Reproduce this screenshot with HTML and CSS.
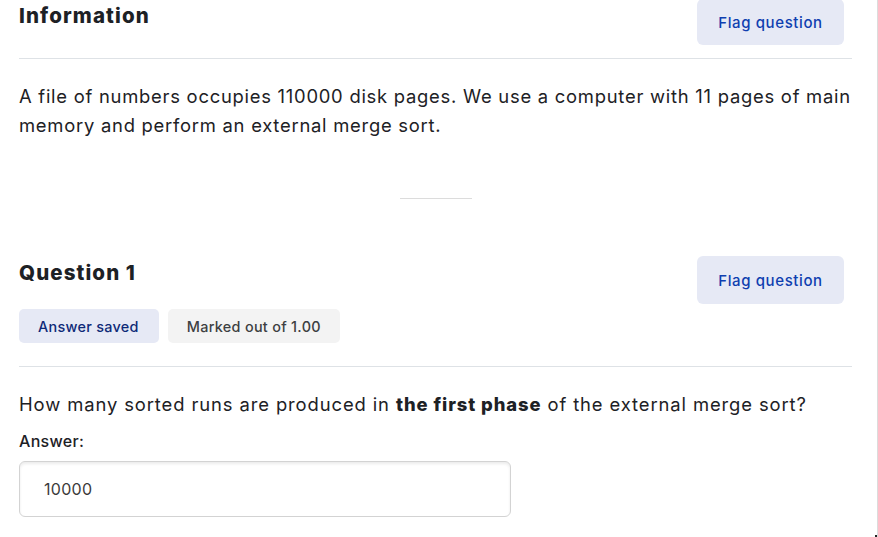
FILE: index.html
```html
<!DOCTYPE html>
<html>
<head>
<meta charset="utf-8">
<link rel="stylesheet" href="styles.css">
</head>
<body>
<div class="page">
  <div class="main">
    <section class="block first">
      <div class="head">
        <h3 class="title">Information</h3>
        <button class="flag">Flag question</button>
      </div>
      <div class="content">
        <p class="text">A file of numbers occupies 110000 disk pages. We use a computer with 11 pages of main memory and perform an external merge sort.</p>
      </div>
    </section>
    <div class="sep-wrap"><div class="sep"></div></div>
    <section class="block q">
      <div class="head">
        <div class="info">
          <h3 class="title">Question 1</h3>
          <div class="badges">
            <span class="badge saved">Answer saved</span>
            <span class="badge marked">Marked out of 1.00</span>
          </div>
        </div>
        <button class="flag">Flag question</button>
      </div>
      <div class="content">
        <p class="text qtext">How many sorted runs are produced in <strong>the first phase</strong> of the external merge sort?</p>
        <label class="lbl">Answer:</label>
        <div class="input">10000</div>
      </div>
    </section>
  </div>
  <div class="corner"></div>
</div>
</body>
</html>
```
FILE: styles.css
```css
* { box-sizing: border-box; }
html, body { margin: 0; padding: 0; background: #fff; }
body {
  font-family: "Inter", "Open Sans", sans-serif;
  color: #1d2125;
  width: 878px;
  height: 537px;
  overflow: hidden;
}
.page {
  position: relative;
  width: 878px;
  height: 537px;
}
.main {
  width: 878px;
  height: 537px;
  border-right: 1px solid #dcdcdc;
  padding-left: 19px;
  padding-right: 25px;
}
.head {
  display: flex;
  justify-content: space-between;
  align-items: flex-start;
  border-bottom: 1px solid #dee2e6;
}
.title {
  margin: 0;
  font-size: 20.5px;
  font-weight: 800;
  color: #1d2125;
  letter-spacing: 1.1px;
}
.first .head { height: 59px; }
.first .title { margin-top: 4px; line-height: 24px; }
.flag {
  font-family: inherit;
  font-size: 15px;
  font-weight: 500;
  letter-spacing: 0.6px;
  color: #0f3fb0;
  background: #e6e9f5;
  border: none;
  border-radius: 6px;
  width: 147px;
  height: 46px;
  margin-right: 8px;
  padding: 0;
}
.first .flag { margin-top: -1px; }
.content { padding-top: 23px; }
.text {
  margin: 0;
  font-size: 18.4px;
  line-height: 29px;
  color: #1d2125;
  letter-spacing: 0.75px;
}
.sep-wrap {
  display: flex;
  justify-content: center;
  padding-top: 58px;
  height: 108px;
}
.sep {
  width: 72px;
  border-top: 1px solid #dcdcdc;
  height: 0;
}
.q .head { height: 119px; }
.info { display: flex; flex-direction: column; }
.q .title { margin-top: 13px; line-height: 24px; }
.q .flag { margin-top: 8px; height: 48px; }
.badges { display: flex; gap: 9px; margin-top: 24px; }
.badge {
  font-size: 14.4px;
  font-weight: 500;
  letter-spacing: 0.3px;
  height: 34px;
  display: flex;
  align-items: center;
  border-radius: 5px;
  padding: 0 19px;
}
.saved { background: #e6e9f5; color: #0e2a78; padding: 0 20px 0 19px; }
.marked { background: #f3f3f3; color: #3d3f42; }
.q .content { padding-top: 24px; }
.qtext { line-height: 26px; letter-spacing: 0.9px; }
.qtext strong { font-weight: 800; }
.lbl {
  display: block;
  margin-top: 13px;
  font-size: 16px;
  font-weight: 500;
  line-height: 22px;
  letter-spacing: 0.3px;
}
.input {
  margin-top: 9px;
  width: 492px;
  height: 56px;
  border: 1px solid #d3d3d3;
  border-radius: 6px;
  box-shadow: inset 0 2px 3px rgba(0,0,0,0.08);
  font-size: 16px;
  letter-spacing: 0.3px;
  color: #3b3b3b;
  display: flex;
  align-items: center;
  padding-left: 24px;
}
.corner {
  position: absolute;
  right: 1px;
  bottom: 0;
  width: 2px;
  height: 2px;
  background: #222;
}
```
